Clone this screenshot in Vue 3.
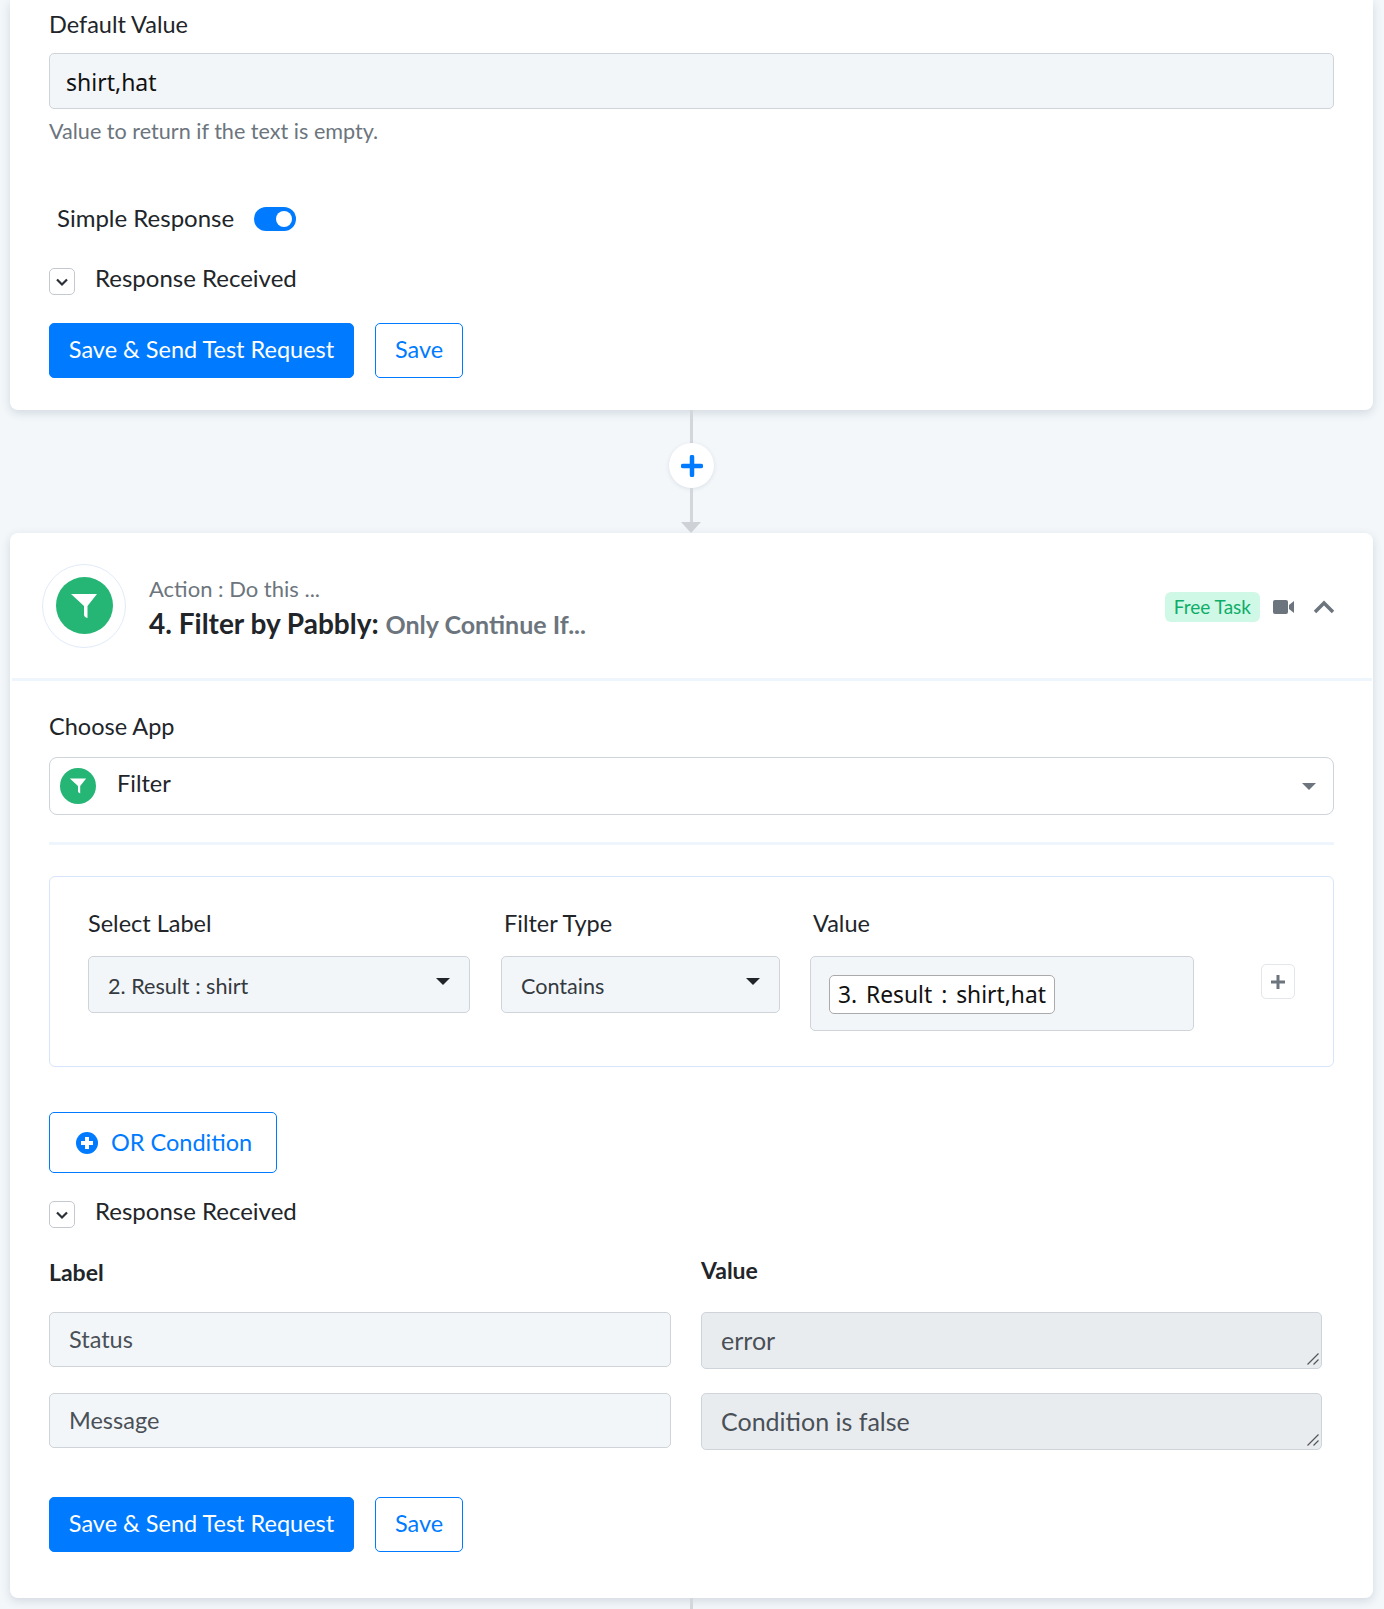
<script setup>
const rows = [
  { label: 'Status', value: 'error' },
  { label: 'Message', value: 'Condition is false' },
];
</script>

<template>
  <div class="page">
    <section class="card card-top">
      <div class="field-label first">Default Value</div>
      <input class="input default-input" value="shirt,hat" />
      <p class="help">Value to return if the text is empty.</p>

      <div class="simple">
        <span class="simple-text">Simple Response</span>
        <span class="toggle"><i></i></span>
      </div>

      <div class="received">
        <span class="check">
          <svg width="16" height="16" viewBox="0 0 16 16"><path d="M3 5.500l5 5 5-5" fill="none" stroke="#2b2f36" stroke-width="2.200" /></svg>
        </span>
        <span class="received-text">Response Received</span>
      </div>

      <div class="actions">
        <button class="btn primary">Save &amp; Send Test Request</button>
        <button class="btn outline">Save</button>
      </div>
    </section>

    <div class="connector">
      <span class="line l1"></span>
      <span class="add">
        <svg width="22" height="22" viewBox="0 0 22 22"><path d="M11 2v18M2 11h18" stroke="#007bff" stroke-width="4.500" stroke-linecap="round" /></svg>
      </span>
      <span class="line l2"></span>
      <span class="arrow"></span>
    </div>

    <section class="card">
      <header class="head">
        <div class="logo-ring">
          <span class="logo">
            <svg width="32" height="32" viewBox="0 0 32 32"><path d="M3 4h26L19.500 16v12q-3.500-1-3.500-3.500V16z" fill="#fff" /></svg>
          </span>
        </div>
        <div class="head-text">
          <div class="eyebrow">Action : Do this ...</div>
          <div class="title">4. Filter by Pabbly: <span>Only Continue If...</span></div>
        </div>
        <span class="badge">Free Task</span>
        <svg class="video" width="22" height="14" viewBox="0 0 22 14"><rect y="0" width="15" height="14" rx="2" fill="#6c757d" /><path d="M16 5l5-4v12l-5-4z" fill="#6c757d" /></svg>
        <svg class="caret-up" width="22" height="14" viewBox="0 0 22 14"><path d="M2 12l9-9 9 9" fill="none" stroke="#6c757d" stroke-width="3.500" /></svg>
      </header>

      <div class="body">
        <div class="field-label app-label">Choose App</div>
        <div class="app-select">
          <span class="logo small">
            <svg width="20" height="20" viewBox="0 0 32 32"><path d="M3 4h26L19.500 16v12q-3.500-1-3.500-3.500V16z" fill="#fff" /></svg>
          </span>
          <span class="app-name">Filter</span>
          <span class="tri grey"></span>
        </div>
        <div class="rule"></div>

        <div class="filter-box">
          <div class="filter-col c1">
            <div class="field-label">Select Label</div>
            <div class="select"><span class="select-text">2. Result : shirt</span><span class="tri"></span></div>
          </div>
          <div class="filter-col c2">
            <div class="field-label">Filter Type</div>
            <div class="select"><span class="select-text">Contains</span><span class="tri"></span></div>
          </div>
          <div class="filter-col c3">
            <div class="field-label">Value</div>
            <div class="value-box"><span class="chip">3. Result : shirt,hat</span></div>
          </div>
          <button class="plus">
            <svg width="16" height="16" viewBox="0 0 16 16"><path d="M8 1v14M1 8h14" stroke="#6c757d" stroke-width="3" /></svg>
          </button>
        </div>

        <button class="btn outline or">
          <svg width="22" height="22" viewBox="0 0 22 22"><circle cx="11" cy="11" r="11" fill="#007bff" /><path d="M11 5v12M5 11h12" stroke="#fff" stroke-width="4" /></svg>
          OR Condition
        </button>

        <div class="received second">
          <span class="check">
            <svg width="16" height="16" viewBox="0 0 16 16"><path d="M3 5.500l5 5 5-5" fill="none" stroke="#2b2f36" stroke-width="2.200" /></svg>
          </span>
          <span class="received-text">Response Received</span>
        </div>

        <div class="map">
          <div class="map-head lab">Label</div>
          <div class="map-head val">Value</div>
          <template v-for="row in rows" :key="row.label">
            <input class="input map-input" :value="row.label" />
            <div class="area-wrap">
              <textarea class="map-area" readonly :value="row.value"></textarea>
              <svg class="grip" width="12" height="12" viewBox="0 0 12 12"><path d="M0.500 11.500L11.500 0.500M6.500 11.500L11.500 6.500" stroke="#555" stroke-width="1.200" fill="none" /></svg>
            </div>
          </template>
        </div>

        <div class="actions bottom">
          <button class="btn primary">Save &amp; Send Test Request</button>
          <button class="btn outline">Save</button>
        </div>
      </div>
    </section>

    <span class="tail"></span>
  </div>
</template>

<style>
html, body {
  margin: 0;
  background: #f3f7fa;
}
</style>

<style scoped>
.page {
  height: 1609px;
  overflow: hidden;
  background: #f3f7fa;
  padding: 0 11px 0 10px;
  box-sizing: border-box;
  font-family: "Lato", "Open Sans", sans-serif;
  font-size: 23.500px;
  color: #212529;
}

.card {
  background: #fff;
  border-radius: 8px;
  box-shadow: 0 3px 10px rgba(40, 60, 90, 0.16);
}

.card-top {
  border-radius: 0 0 8px 8px;
  padding: 0 39px 32px;
  height: 410px;
  box-sizing: border-box;
}

.field-label {
  line-height: 28px;
}

.first {
  padding-top: 10px;
}

.input {
  display: block;
  width: 100%;
  box-sizing: border-box;
  background: #f3f6f9;
  border: 1px solid #ced4da;
  border-radius: 5px;
  outline: none;
  font-family: inherit;
  font-size: 23.500px;
}

.default-input {
  height: 56px;
  margin-top: 15px;
  padding: 2px 16px 0;
  color: #111;
  font-family: "Noto Sans", sans-serif;
  font-size: 23px;
}

.help {
  margin: 9px 0 0;
  line-height: 26px;
  font-size: 21.600px;
  color: #6c757d;
}

.simple {
  display: flex;
  align-items: center;
  gap: 20px;
  margin-top: 60px;
  padding-left: 8px;
  height: 30px;
  font-size: 24px;
}

.simple-text {
  margin-bottom: 4px;
}

.toggle {
  position: relative;
  width: 42px;
  height: 24px;
  border-radius: 12px;
  background: #007bff;
}

.toggle i {
  position: absolute;
  top: 4px;
  right: 4px;
  width: 16px;
  height: 16px;
  border-radius: 50%;
  background: #fff;
}

.received {
  display: flex;
  align-items: flex-start;
  gap: 20px;
  margin-top: 33px;
  line-height: 24px;
  font-size: 24px;
}

.received-text {
  margin-top: -1px;
}

.check {
  display: flex;
  align-items: center;
  justify-content: center;
  width: 26px;
  height: 27px;
  margin-top: 1px;
  box-sizing: border-box;
  border: 1px solid #c4c9d0;
  border-radius: 5px;
}

.actions {
  display: flex;
  gap: 21px;
  margin-top: 28px;
}

.btn {
  height: 55px;
  box-sizing: border-box;
  border-radius: 5px;
  font-family: inherit;
  font-size: 23.500px;
  cursor: pointer;
}

.primary {
  width: 305px;
  padding: 0 0 3px;
  background: #007bff;
  border: 1px solid #007bff;
  color: #fff;
}

.outline {
  width: 88px;
  padding: 0 0 3px;
  background: #fff;
  border: 1px solid #007bff;
  color: #007bff;
}

.connector {
  position: relative;
  height: 123px;
}

.line {
  position: absolute;
  left: 680px;
  width: 3px;
  background: #d3d7dc;
}

.l1 {
  top: 0;
  height: 34px;
}

.l2 {
  top: 78px;
  height: 36px;
}

.add {
  position: absolute;
  left: 659px;
  top: 33px;
  width: 45px;
  height: 45px;
  display: flex;
  align-items: center;
  justify-content: center;
  border-radius: 50%;
  background: #fff;
  box-shadow: 0 1px 4px rgba(40, 60, 90, 0.12);
}

.arrow {
  position: absolute;
  left: 671px;
  top: 112px;
  border-style: solid;
  border-width: 11px 10px 0;
  border-color: #ced2d7 transparent transparent;
}

.head {
  display: flex;
  align-items: center;
  height: 148px;
  box-sizing: border-box;
  margin: 0 1px 0 2px;
  padding: 0 37px 0 30px;
  border-bottom: 3px solid #eef5fd;
}

.logo-ring {
  display: flex;
  align-items: center;
  justify-content: center;
  width: 84px;
  height: 84px;
  border: 1px solid #e2ebfa;
  border-radius: 50%;
  box-sizing: border-box;
}

.logo {
  display: flex;
  align-items: center;
  justify-content: center;
  width: 57px;
  height: 57px;
  border-radius: 50%;
  background: #25b574;
}

.logo.small {
  width: 36px;
  height: 36px;
}

.head-text {
  flex: 1;
  margin-left: 23px;
  padding-top: 5px;
}

.eyebrow {
  font-size: 22px;
  line-height: 26px;
  color: #6c757d;
}

.title {
  margin-top: 5px;
  font-size: 28px;
  line-height: 32px;
  font-weight: 700;
  color: #212529;
}

.title span {
  font-size: 25px;
  color: #6c757d;
}

.badge {
  padding: 0 9px;
  line-height: 30px;
  border-radius: 6px;
  background: #d0f8e6;
  color: #0ead69;
  font-size: 19px;
  margin-top: 2px;
}

.video {
  margin-left: 13px;
  margin-top: 2px;
}

.caret-up {
  margin-left: 18px;
  margin-top: 2px;
}

.body {
  padding: 31px 39px 0;
}

.app-select {
  display: flex;
  align-items: center;
  height: 58px;
  margin-top: 17px;
  padding: 0 17px 0 10px;
  box-sizing: border-box;
  border: 1px solid #ced4da;
  border-radius: 8px;
}

.app-name {
  flex: 1;
  margin-left: 21px;
  margin-bottom: 6px;
}

.tri {
  width: 0;
  height: 0;
  border-style: solid;
  border-width: 7px 7px 0;
  border-color: #212529 transparent transparent;
}

.tri.grey {
  border-color: #6c757d transparent transparent;
}

.rule {
  height: 3px;
  margin-top: 27px;
  background: #eef5fd;
}

.filter-box {
  display: flex;
  align-items: flex-start;
  height: 191px;
  margin-top: 31px;
  padding: 32px 38px 0;
  box-sizing: border-box;
  border: 1px solid #d8e4fb;
  border-radius: 6px;
}

.c1 {
  width: 382px;
}

.c2 {
  width: 279px;
  margin-left: 31px;
}

.c3 {
  width: 384px;
  margin-left: 30px;
}

.c2 .field-label {
  padding-left: 3px;
}

.c3 .field-label {
  padding-left: 3px;
}

.filter-col .field-label {
  margin-bottom: 19px;
}

.select {
  display: flex;
  align-items: center;
  justify-content: space-between;
  height: 57px;
  padding: 0 19px;
  box-sizing: border-box;
  background: #f3f6f9;
  border: 1px solid #ced4da;
  border-radius: 5px;
  font-size: 21.600px;
  color: #343a40;
}

.select-text {
  margin-top: 2px;
}

.select .tri {
  margin-bottom: 6px;
}

.value-box {
  height: 75px;
  padding: 18px;
  box-sizing: border-box;
  background: #f3f6f9;
  border: 1px solid #ced4da;
  border-radius: 5px;
}

.chip {
  display: inline-block;
  padding: 0 8px;
  height: 39px;
  line-height: 37px;
  box-sizing: border-box;
  background: #fff;
  border: 1px solid #aaa;
  border-radius: 5px;
  font-family: "Noto Sans", sans-serif;
  font-size: 22.800px;
  word-spacing: 3px;
  color: #111;
  white-space: nowrap;
}

.plus {
  display: flex;
  align-items: center;
  justify-content: center;
  width: 34px;
  height: 35px;
  margin: 55px 0 0 67px;
  padding: 0;
  background: #fff;
  border: 1px solid #e3e6ea;
  border-radius: 5px;
}

.or {
  display: flex;
  align-items: center;
  gap: 13px;
  width: 228px;
  height: 61px;
  margin-top: 45px;
  padding: 0 0 2px 26px;
}

.or svg {
  margin-top: 2px;
}

.received.second {
  margin-top: 27px;
}

.map {
  display: grid;
  grid-template-columns: 622px 621px;
  column-gap: 30px;
  align-items: start;
  margin-top: 28px;
}

.map-head {
  font-weight: 700;
  font-size: 23px;
  line-height: 28px;
}

.lab {
  padding-top: 2px;
  height: 54px;
}

.map-input {
  height: 55px;
  margin-bottom: 26px;
  padding: 0 19px 1px;
  color: #495057;
}

.area-wrap {
  position: relative;
  height: 57px;
  margin-bottom: 24px;
}

.map-area {
  display: block;
  width: 100%;
  height: 57px;
  padding: 11px 19px;
  box-sizing: border-box;
  background: #e9ecef;
  border: 1px solid #ced4da;
  border-radius: 5px;
  outline: none;
  resize: none;
  font-family: inherit;
  font-size: 25px;
  line-height: 32px;
  color: #495057;
}

.grip {
  position: absolute;
  right: 3px;
  bottom: 4px;
}

.actions.bottom {
  margin-top: 23px;
  padding-bottom: 46px;
}

.tail {
  display: block;
  width: 3px;
  height: 11px;
  margin-left: 680px;
  background: #d3d7dc;
}
</style>
